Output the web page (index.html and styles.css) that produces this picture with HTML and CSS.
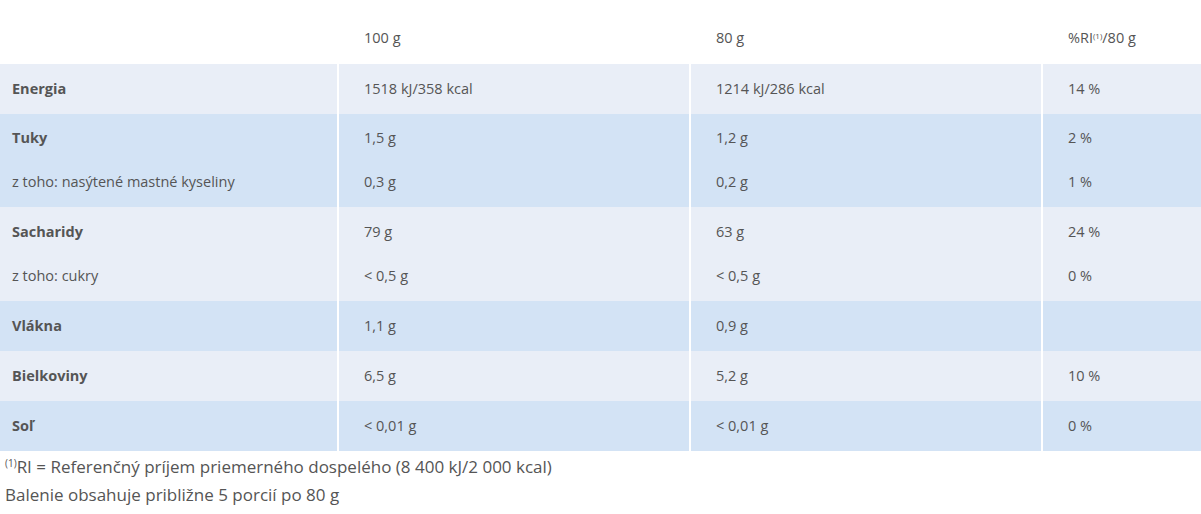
FILE: index.html
```html
<!DOCTYPE html>
<html lang="sk">
<head>
<meta charset="utf-8">
<link rel="stylesheet" href="styles.css">
</head>
<body>
<table class="nutri">
  <colgroup>
    <col class="c1"><col class="c2"><col class="c3"><col class="c4">
  </colgroup>
  <thead>
    <tr class="head">
      <th></th><th>100 g</th><th>80 g</th><th>%RI<sup>(1)</sup>/80 g</th>
    </tr>
  </thead>
  <tbody class="light">
    <tr class="single"><td class="lbl">Energia</td><td>1518 kJ/358 kcal</td><td>1214 kJ/286 kcal</td><td>14 %</td></tr>
  </tbody>
  <tbody class="dark">
    <tr class="first"><td class="lbl">Tuky</td><td>1,5 g</td><td>1,2 g</td><td>2 %</td></tr>
    <tr class="sub"><td>z toho: nasýtené mastné kyseliny</td><td>0,3 g</td><td>0,2 g</td><td>1 %</td></tr>
  </tbody>
  <tbody class="light tall">
    <tr class="first"><td class="lbl">Sacharidy</td><td>79 g</td><td>63 g</td><td>24 %</td></tr>
    <tr class="sub"><td>z toho: cukry</td><td>&lt; 0,5 g</td><td>&lt; 0,5 g</td><td>0 %</td></tr>
  </tbody>
  <tbody class="dark">
    <tr class="single"><td class="lbl">Vlákna</td><td>1,1 g</td><td>0,9 g</td><td></td></tr>
  </tbody>
  <tbody class="light">
    <tr class="single"><td class="lbl">Bielkoviny</td><td>6,5 g</td><td>5,2 g</td><td>10 %</td></tr>
  </tbody>
  <tbody class="dark">
    <tr class="single"><td class="lbl">Soľ</td><td>&lt; 0,01 g</td><td>&lt; 0,01 g</td><td>0 %</td></tr>
  </tbody>
</table>
<div class="notes">
  <p><sup>(1)</sup>RI = Referenčný príjem priemerného dospelého (8 400 kJ/2 000 kcal)</p>
  <p>Balenie obsahuje približne 5 porcií po 80 g</p>
</div>
</body>
</html>
```
FILE: styles.css
```css
html, body {
  margin: 0;
  padding: 0;
  background: #ffffff;
}
body {
  font-family: "Open Sans", "Noto Sans", "DejaVu Sans", sans-serif;
  color: #555555;
}
.nutri {
  width: 1201px;
  border-collapse: collapse;
  table-layout: fixed;
  font-size: 14.5px;
}
.c1 { width: 338px; }
.c2 { width: 352px; }
.c3 { width: 352px; }
.c4 { width: 159px; }
.nutri th, .nutri td {
  text-align: left;
  font-weight: normal;
  line-height: 24px;
  padding: 13px 10px 13px 25px;
  border-left: 2px solid #ffffff;
  white-space: nowrap;
  vertical-align: top;
}
.nutri th:first-child, .nutri td:first-child {
  border-left: none;
  padding-left: 12px;
}
.nutri .head th {
  padding-top: 26px;
  padding-bottom: 14px;
}
sup {
  font-size: 8px;
  line-height: 0;
  vertical-align: baseline;
  position: relative;
  top: -4px;
}
.light { background: #e9eef7; }
.dark { background: #d3e3f5; }
.nutri .first td { padding-top: 12px; padding-bottom: 11px; }
.nutri .sub td { padding-top: 9px; padding-bottom: 13px; }
.nutri .tall .first td { padding-top: 13px; padding-bottom: 10px; }
.nutri .tall .sub td { padding-top: 10px; padding-bottom: 13px; }
.nutri .lbl { font-weight: bold; }
.notes {
  padding: 2px 5px 0 5px;
  font-size: 17px;
  line-height: 28px;
}
.notes p { margin: 0; }
.notes sup {
  font-size: 10px;
  top: -6px;
}
```
